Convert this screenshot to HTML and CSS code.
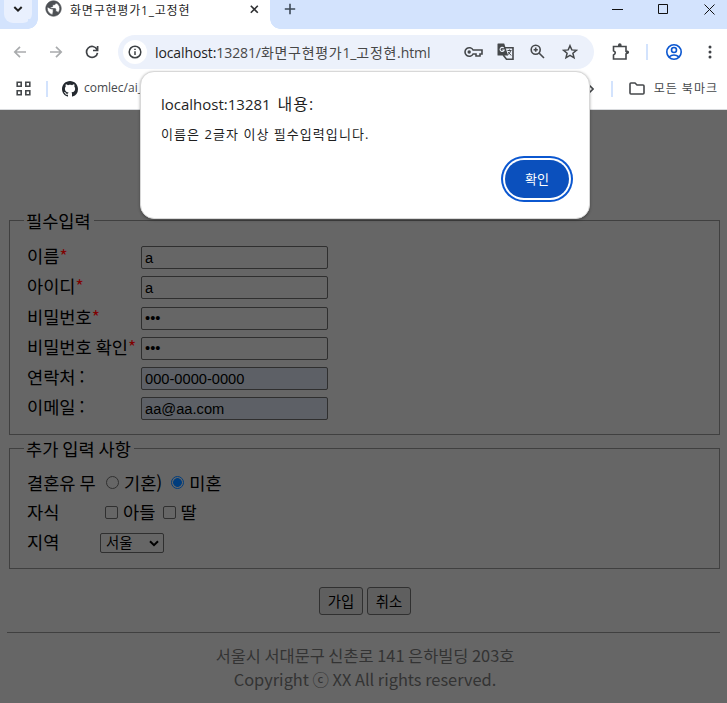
FILE: index.html
```html
<!DOCTYPE html>
<html lang="ko">
<head>
<meta charset="utf-8">
<title>화면구현평가1_고정현</title>
<link rel="stylesheet" href="styles.css">
</head>
<body>
<header class="browser">
  <div class="tabs">
    <button class="tab-search" aria-label="탭 검색"><svg width="10" height="8" viewBox="0 0 10 8"><path d="M1.3 2L5 5.7 8.7 2"/></svg></button>
    <div class="tab">
      <svg class="globe" width="17" height="17" viewBox="1 1 22 22"><path d="M12 2C6.48 2 2 6.48 2 12s4.48 10 10 10 10-4.48 10-10S17.52 2 12 2zm-1 17.93c-3.95-.49-7-3.85-7-7.93 0-.62.08-1.21.21-1.79L9 12.5h2.5V16c0 1.1-.5 2-.5 3.93zm6.9-2.54c-.26-.81-1-1.39-1.9-1.39h-1v-3c0-.55-.45-1-1-1H8v-2h2c.55 0 1-.45 1-1V7h2c1.1 0 2-.9 2-2v-.41c2.93 1.19 5 4.06 5 7.41 0 2.08-.8 3.97-2.1 5.39z"/></svg>
      <span class="tab-title">화면구현평가1_고정현</span>
      <svg class="close" width="9" height="9" viewBox="0 0 9 9"><path d="M.8.8l7 7M7.8.8l-7 7"/></svg>
    </div>
    <svg class="new-tab" width="12" height="12" viewBox="0 0 12 12"><path d="M6 .8v10.4M.8 6h10.4"/></svg>
    <div class="window-controls">
      <svg width="11" height="11" viewBox="0 0 11 11"><path d="M0 5.5h11"/></svg>
      <svg width="11" height="11" viewBox="0 0 11 11"><path d="M.5.5h9v9h-9z"/></svg>
      <svg width="11" height="11" viewBox="0 0 11 11"><path d="M.5.5l10 10M10.5.5l-10 10"/></svg>
    </div>
  </div>
  <div class="toolbar">
    <svg class="nav off" width="14" height="14" viewBox="0 0 14 14"><path d="M13 7H2M7 1.8L1.8 7 7 12.2"/></svg>
    <svg class="nav off" width="14" height="14" viewBox="0 0 14 14"><path d="M1 7h11M7 1.8L12.2 7 7 12.2"/></svg>
    <svg class="nav" width="14" height="14" viewBox="0 0 14 14"><path d="M12 4.5A5.5 5.5 0 1 0 12.5 7.8M12.6 1v4.5H8"/></svg>
    <div class="address">
      <span class="info"><svg width="14" height="14" viewBox="0 0 14 14"><circle cx="7" cy="7" r="5.8"/><path d="M7 6.3v3.8M7 3.7v1.4"/></svg></span>
      <span class="url"><b>localhost:</b>13281/<i>화면구현평가</i>1_<i>고정현</i>.html</span>
      <svg class="key" width="19" height="12" viewBox="0 0 19 12"><path d="M9.1 4A4.3 4.3 0 1 0 9.1 8H12v2h4V8h2V4z"/><circle cx="5.2" cy="6" r="1.7" class="solid"/></svg>
      <svg class="translate" width="17" height="17" viewBox="0 0 17 17"><path d="M7.5 4.7H16v11.5H9.5L6.2 12"/><path class="solid" d="M1 .5h6.2l3.9 12H1q-.5 0-.5-.5V1q0-.5.5-.5z"/><path class="paper" d="M6.7 5a2.1 2.1 0 1 0 .5 2H5.2"/><path class="thin" d="M10.5 7.5h4M12.5 6.5v1M13.7 7.5q-.5 3-3 4.2M11.2 9l3 3.5"/></svg>
      <svg class="magnify" width="15" height="15" viewBox="0 0 15 15"><circle cx="5.7" cy="5.7" r="4.5"/><path d="M9 9l5 5M3.6 5.7h4.2M5.7 3.6v4.2"/></svg>
      <svg class="star" width="16" height="16" viewBox="0 0 16 16"><path d="M8 1.7l1.8 4.2 4.6.4-3.5 3 1.1 4.5L8 11.4l-4 2.4 1.1-4.5-3.5-3 4.6-.4z"/></svg>
    </div>
    <svg class="puzzle" width="18" height="18" viewBox="0 0 18 18"><path d="M1.5 3.5H14V8.5q2.6.7 0 2.5V16H1.5V12q3.6-2.2 0-4.3z"/><path class="solid" d="M6 3V2a1.8 1.8 0 0 1 3.6 0v1zM14.5 7.5h.8a1.8 1.8 0 0 1 0 3.6h-.8z"/></svg>
    <span class="divider"></span>
    <svg class="profile" width="18" height="18" viewBox="0 0 18 18"><circle cx="9" cy="9" r="7.2"/><circle cx="9" cy="7" r="2.5"/><path d="M3.9 14q5-4 10.2 0"/></svg>
    <svg class="menu" width="4" height="14" viewBox="0 0 4 14"><circle cx="2" cy="2" r="1.5"/><circle cx="2" cy="7" r="1.5"/><circle cx="2" cy="12" r="1.5"/></svg>
  </div>
  <div class="bookmarks">
    <svg class="apps" width="15" height="15" viewBox="0 0 15 15"><path d="M1.2 1.2h4v4h-4zM9.8 1.2h4v4h-4zM1.2 9.8h4v4h-4zM9.8 9.8h4v4h-4z"/></svg>
    <span class="divider"></span>
    <svg class="github" width="16" height="16" viewBox="0 0 16 16"><path d="M8 0C3.58 0 0 3.58 0 8c0 3.54 2.29 6.53 5.47 7.59.4.07.55-.17.55-.38 0-.19-.01-.82-.01-1.49-2.01.37-2.53-.49-2.69-.94-.09-.23-.48-.94-.82-1.13-.28-.15-.68-.52-.01-.53.63-.01 1.08.58 1.23.82.72 1.21 1.87.87 2.33.66.07-.52.28-.87.51-1.07-1.78-.2-3.64-.89-3.64-3.95 0-.87.31-1.59.82-2.15-.08-.2-.36-1.02.08-2.12 0 0 .67-.21 2.2.82.64-.18 1.32-.27 2-.27s1.36.09 2 .27c1.53-1.04 2.2-.82 2.2-.82.44 1.1.16 1.92.08 2.12.51.56.82 1.27.82 2.15 0 3.07-1.87 3.75-3.65 3.95.29.25.54.73.54 1.48 0 1.07-.01 1.93-.01 2.2 0 .21.15.46.55.38A8 8 0 0 0 16 8c0-4.42-3.58-8-8-8"/></svg>
    <span class="bookmark">comlec/ai_</span>
    <svg class="overflow" width="6" height="10" viewBox="0 0 6 10"><path d="M1 1l4 4-4 4"/></svg>
    <span class="divider"></span>
    <svg class="folder" width="16" height="13" viewBox="0 0 16 13"><path d="M1 2q0-1 1-1h4l2 2h6q1 0 1 1v7q0 1-1 1H2q-1 0-1-1z"/></svg>
    <span class="all">모든 북마크</span>
  </div>
</header>

<main class="page">
  <form>
    <fieldset class="required">
      <legend>필수입력</legend>
      <div class="fields">
        <label for="name">이름<em>*</em></label><input id="name" type="text" value="a">
        <label for="uid">아이디<em>*</em></label><input id="uid" type="text" value="a">
        <label for="pw">비밀번호<em>*</em></label><input id="pw" type="password" value="aaa">
        <label for="pw2">비밀번호 확인<em>*</em></label><input id="pw2" type="password" value="aaa">
        <label for="tel">연락처 :</label><input id="tel" class="filled" type="text" value="000-0000-0000">
        <label for="mail">이메일 :</label><input id="mail" class="filled" type="text" value="aa@aa.com">
      </div>
    </fieldset>
    <fieldset class="extra">
      <legend>추가 입력 사항</legend>
      <div class="row married"><span class="caption">결혼유 무</span><span class="radio"></span><span class="first">기혼)</span><span class="radio on"></span><span>미혼</span></div>
      <div class="row child"><span class="caption">자식</span><span class="check"></span><span class="first">아들</span><span class="check"></span><span>딸</span></div>
      <div class="row region"><span class="caption">지역</span><span class="select"><span>서울</span><svg width="10" height="7" viewBox="0 0 10 7"><path d="M1 1.2l4 4 4-4"/></svg></span></div>
    </fieldset>
    <div class="actions"><button type="button">가입</button><button type="button" class="cancel">취소</button></div>
  </form>
  <footer>
    <p class="street">서울시 서대문구 신촌로 141 은하빌딩 203호</p>
    <p class="copy">Copyright ⓒ XX All rights reserved.</p>
  </footer>
</main>

<div class="dialog" role="alertdialog">
  <h1>localhost:13281 <span>내용:</span></h1>
  <p>이름은 2글자 이상 필수입력입니다.</p>
  <button type="button">확인</button>
</div>
</body>
</html>
```
FILE: styles.css
```css
* { box-sizing: border-box; }
body { margin: 0; width: 727px; height: 703px; overflow: hidden; background: #666; font-family: "Noto Sans CJK KR", sans-serif; }
svg { display: block; flex: none; fill: none; stroke: #45484b; stroke-width: 1.6; }
svg .solid { fill: #45484b; stroke: none; }
button { padding: 0; border: 0; }
p, h1 { margin: 0; font-weight: 400; }
span { white-space: nowrap; }

.browser { height: 110px; background: #fff; border-bottom: 1px solid #d8dadd; font-family: "Open Sans", "Noto Sans CJK KR", sans-serif; }
.tabs { display: flex; height: 29px; background: #d3e3fd; }
.tab-search { display: flex; justify-content: center; align-items: flex-start; width: 28px; height: 23px; margin-left: 4px; padding-top: 5px; border-radius: 0 0 9px 9px; background: #e9f0fe; }
.tab-search svg { stroke: #1f1f1f; stroke-width: 2; }
.tab { position: relative; display: flex; width: 232px; height: 29px; margin-left: 6px; padding: 1px 11px 0 8px; background: #fff; }
.tab::before, .tab::after { content: ""; position: absolute; bottom: 0; width: 10px; height: 10px; }
.tab::before { left: -10px; background: radial-gradient(circle at 0 0, #d3e3fd 9.5px, #fff 10px); }
.tab::after { right: -10px; background: radial-gradient(circle at 100% 0, #d3e3fd 9.5px, #fff 10px); }
.globe { margin: -1px 0 0 -1px; fill: #4d5054; stroke: #4d5054; stroke-width: .8; }
.tab-title { margin-left: 8px; color: #1f1f1f; font-size: 12px; line-height: 19px; letter-spacing: .8px; }
.close { margin: 4px 0 0 auto; stroke: #303133; }
.new-tab { margin: 3px 0 0 14px; stroke: #3d4957; }
.window-controls { display: flex; gap: 35px; margin: 4px 12px 0 auto; }
.window-controls svg { stroke: #111; stroke-width: 1; }

.toolbar { display: flex; align-items: center; height: 45px; padding: 0 15px 0 13px; }
.nav { margin-right: 22px; stroke: #3f4246; stroke-width: 1.7; }
.nav.off { stroke: #a9abad; }
.address { display: flex; align-items: center; width: 476px; height: 34px; margin-left: -3px; padding: 0 16px 0 5px; border-radius: 17px; background: #ecf1fb; }
.info { width: 24px; height: 24px; padding: 5px; border-radius: 50%; background: #fff; }
.info svg { stroke: #3c4043; stroke-width: 1.5; }
.url { width: 310px; margin-left: 8px; color: #474747; font-size: 14px; letter-spacing: -.1px; }
.url b { color: #1f1f1f; font-weight: 400; }
.url i { font-style: normal; letter-spacing: .7px; }
.translate { margin-left: 14px; }
.translate .paper { stroke: #ecf1fb; stroke-width: 1.1; }
.translate .thin { stroke-width: 1; }
.magnify { margin-left: 16px; }
.star { margin-left: 17px; stroke-width: 1.5; }
.puzzle { margin-left: 18px; }
.divider { width: 2px; height: 16px; background: #d3e3fd; }
.toolbar .divider { margin-left: 16px; }
.profile { margin-left: 17px; stroke: #0b57d0; }
.menu { margin-left: auto; fill: #3f4246; stroke: none; }

.bookmarks { display: flex; align-items: center; height: 29px; padding: 0 9px 0 16px; color: #45484b; font-size: 12px; }
.apps + .divider { margin: 0 14px 0 15px; }
.github { fill: #24292f; stroke: none; }
.bookmark { width: 60px; margin-left: 6px; line-height: 16px; padding-bottom: 2px; }
.overflow { margin-left: 444px; }
.overflow + .divider { margin: 0 16px 0 17px; }
.all { margin-left: auto; padding-bottom: 2px; letter-spacing: 1px; }

.page { padding: 98px 7px 0; color: #000; font-size: 17.6px; line-height: 24px; word-spacing: -1px; }
fieldset { margin: 0 0 0 2px; padding: 0; width: 711px; min-width: 0; border: 1px solid #404040; }
legend { height: 25px; margin-left: 14px; padding: 0 3px 0 2px; line-height: 25px; }
.required { height: 227px; }
.fields { display: grid; grid-template-columns: 114px 187px; grid-auto-rows: 30.3px; padding: 9px 0 0 17px; }
label { white-space: nowrap; line-height: 28px; }
em { color: #800000; font-style: normal; }
.fields input { width: 187px; height: 23px; margin: 4px 0 0; padding: 0 3px; border: 1px solid #2f2f2f; border-radius: 2px; background: #666; color: #000; font: 14.67px "Liberation Sans", sans-serif; outline: 0; }
.fields input.filled { background: #5d6066; }
.extra { height: 133px; margin-top: 1px; }
.row { display: flex; align-items: center; height: 29.6px; padding-left: 17px; }
.married { margin-top: 7px; }
.caption { width: 79px; }
.radio, .check { width: 13px; height: 13px; margin-right: 5px; border: 1px solid #303030; }
.radio { border-radius: 50%; }
.check { border-radius: 2px; }
.radio.on { border-color: #003d7d; background: radial-gradient(circle, #003d7d 4px, #666 4.7px); }
.first { margin-right: 9px; }
.child .first { margin-right: 8px; }
.child span:last-child { margin-left: -1px; }
.child .caption { width: 78px; }
.region .caption { width: 73px; }
.select { display: flex; align-items: center; justify-content: space-between; width: 64px; height: 20px; margin-top: 3px; padding: 0 4px 0 5px; border: 1px solid #2f2f2f; border-radius: 2px; font-size: 14.4px; line-height: 16px; }
.select > span { padding-bottom: 2px; }
.select svg { stroke: #000; stroke-width: 2; }
.actions { display: flex; justify-content: center; gap: 4px; height: 45px; margin-top: 18px; padding-left: 3px; }
.actions button { width: 44px; height: 28px; padding-bottom: 2px; border: 1px solid #303030; border-radius: 3px; background: #5f5f5f; color: #000; font: 14.4px "Noto Sans CJK KR", sans-serif; }
footer { width: 713px; padding-top: 10px; border-top: 1px solid #404040; color: #333; text-align: center; font-size: 16.4px; }
footer p { padding-left: 3px; white-space: nowrap; }

.dialog { position: absolute; left: 140px; top: 71px; width: 450px; height: 148px; padding: 21px 20px; border: 1px solid #d8d8d8; border-radius: 14px; background: #fff; box-shadow: 0 1px 3px #0005; color: #1f1f1f; font-family: "Open Sans", "Noto Sans CJK KR", sans-serif; }
.dialog h1 { font-size: 15px; line-height: 22px; }
.dialog h1 span { margin-left: 3px; font-size: 16px; letter-spacing: 1px; }
.dialog p { margin-top: 8px; font-size: 13px; line-height: 22px; letter-spacing: 1.05px; }
.dialog button { display: block; width: 64px; height: 38px; margin: 15px 0 0 auto; padding-bottom: 2px; border-radius: 19px; background: #0b50bd; box-shadow: 0 0 0 2px #fff, 0 0 0 4px #0b57d0; color: #fff; font: 13px "Noto Sans CJK KR", sans-serif; }
```
